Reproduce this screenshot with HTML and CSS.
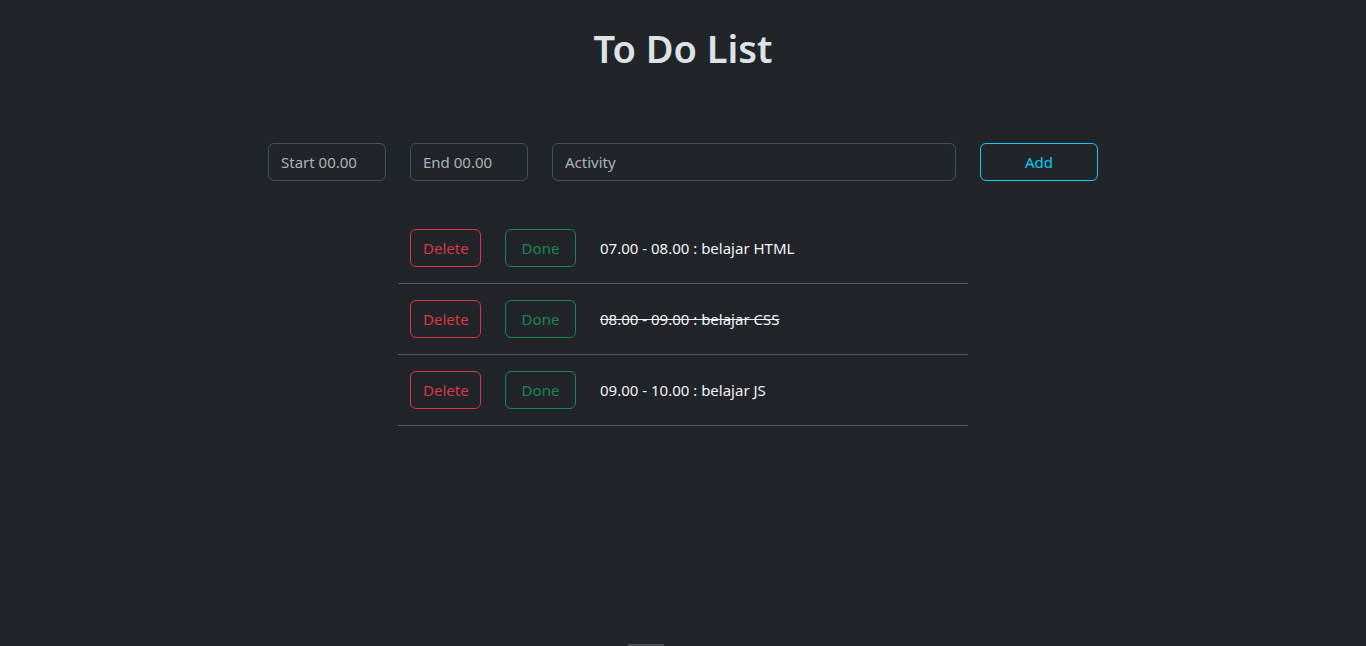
FILE: index.html
```html
<!DOCTYPE html>
<html lang="en">
<head>
<meta charset="utf-8">
<title>To Do List</title>
<link rel="stylesheet" href="styles.css">
</head>
<body>
<main class="page">
  <h1 class="title">To Do List</h1>
  <form class="entry">
    <input class="field field-time" type="text" placeholder="Start 00.00">
    <input class="field field-time" type="text" placeholder="End 00.00">
    <input class="field field-activity" type="text" placeholder="Activity">
    <button class="btn btn-info btn-add" type="button">Add</button>
  </form>
  <ul class="list">
    <li class="item">
      <button class="btn btn-danger" type="button">Delete</button>
      <button class="btn btn-success" type="button">Done</button>
      <span class="item-text">07.00 - 08.00 : belajar HTML</span>
    </li>
    <li class="item">
      <button class="btn btn-danger" type="button">Delete</button>
      <button class="btn btn-success" type="button">Done</button>
      <span class="item-text done">08.00 - 09.00 : belajar CSS</span>
    </li>
    <li class="item">
      <button class="btn btn-danger" type="button">Delete</button>
      <button class="btn btn-success" type="button">Done</button>
      <span class="item-text">09.00 - 10.00 : belajar JS</span>
    </li>
  </ul>
</main>
<div class="scroll-thumb"></div>
</body>
</html>
```
FILE: styles.css
```css
* { box-sizing: border-box; }
html, body { height: 100%; }
body {
  margin: 0;
  background: #212529;
  color: #dee2e6;
  font-family: "Noto Sans", "Open Sans", sans-serif;
  font-size: 16px;
  line-height: 1.5;
  overflow: hidden;
}
.page {
  display: flex;
  flex-direction: column;
  align-items: center;
}
.title {
  margin: 24px 0 0;
  font-size: 38px;
  line-height: 48px;
  font-weight: 600;
  color: #dee2e6;
}
.entry {
  margin-top: 71px;
  display: flex;
  gap: 24px;
}
.field {
  height: 38px;
  padding: 6px 12px;
  border: 1px solid #495057;
  border-radius: 6px;
  background: #212529;
  color: #dee2e6;
  font: inherit;
  font-size: 15px;
  outline: none;
}
.field::placeholder { color: rgba(222, 226, 230, 0.75); }
.field-time { width: 118px; }
.field-activity { width: 404px; }
.btn {
  height: 38px;
  padding: 6px 12px;
  border: 1px solid;
  border-radius: 6px;
  background: transparent;
  font: inherit;
  font-size: 15px;
  cursor: pointer;
}
.btn-add { width: 118px; }
.btn-info { color: #0dcaf0; border-color: #0dcaf0; }
.btn-danger { color: #dc3545; border-color: #dc3545; width: 71px; }
.btn-success { color: #198754; border-color: #198754; width: 71px; }
.list {
  list-style: none;
  margin: 32px 0 0;
  padding: 0;
  width: 570px;
}
.item {
  display: flex;
  align-items: center;
  gap: 24px;
  padding: 16px 12px;
  border-bottom: 1px solid #55595e;
}
.item-text { font-size: 15px; color: #f1f3f5; }
.item-text.done { text-decoration: line-through; }
.scroll-thumb {
  position: fixed;
  left: 628px;
  bottom: 0;
  width: 36px;
  height: 2px;
  background: #4b4e52;
}
```
